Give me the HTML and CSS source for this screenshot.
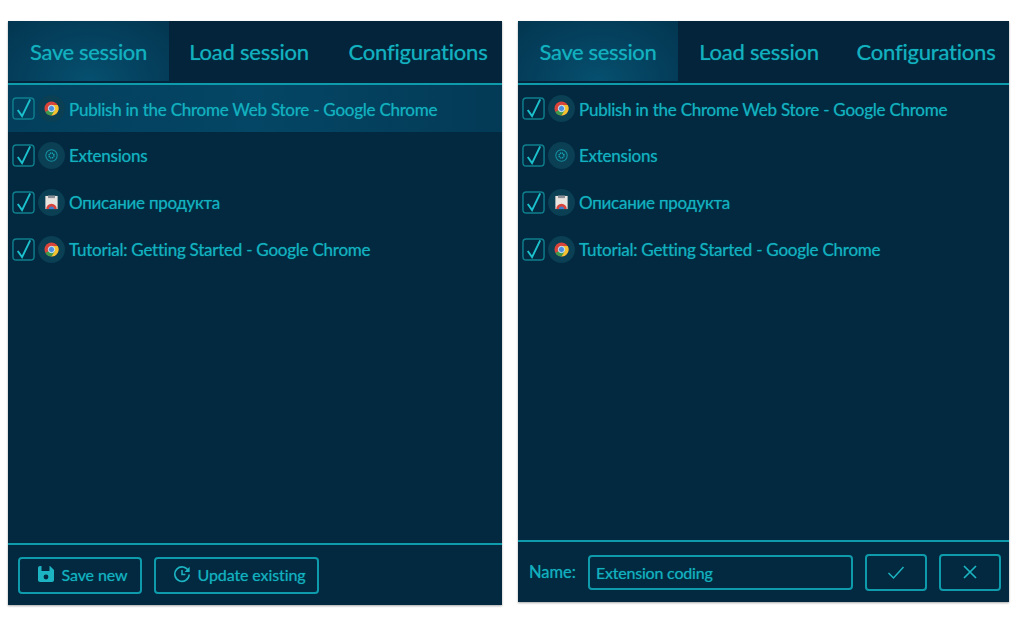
FILE: index.html
```html
<!DOCTYPE html>
<html lang="en">
<head>
    <meta charset="UTF-8">
    <title>Session manager</title>
    <link rel="stylesheet" href="styles.css">
</head>
<body>
    <svg class="defs" width="0" height="0">
        <defs>
            <symbol id="check" viewBox="0 0 24 24">
                <rect x="1" y="1" width="22" height="22" rx="3.5" fill="none" stroke="#0f7f8e" stroke-width="1.5"/>
                <path d="M6 13.5 L10.5 20 L19 2.5" fill="none" stroke="#1cc0cc" stroke-width="2"/>
            </symbol>
            <symbol id="chrome" viewBox="0 0 24 24">
                <circle cx="12" cy="12" r="8" fill="#d8433a"/>
                <path d="M12 12 L12 20 A8 8 0 0 0 19 8 L12 8 Z" fill="#f2c230"/>
                <path d="M12 12 L5 16 A8 8 0 0 0 12 20 L15.5 14 Z" fill="#3f9b4c"/>
                <circle cx="12" cy="12" r="3.6" fill="#4a8ee0" stroke="#e6eef0" stroke-width="1.1"/>
            </symbol>
            <symbol id="gear" viewBox="0 0 24 24">
                <circle cx="12" cy="12" r="6.5" fill="none" stroke="#17909f" stroke-width="1.2"/>
                <circle cx="12" cy="12" r="2.8" fill="none" stroke="#17a5b2" stroke-width="1.8" stroke-dasharray="1.4 0.8"/>
            </symbol>
            <symbol id="store" viewBox="0 0 24 24">
                <rect x="5" y="4.5" width="14" height="15" fill="#e8e4e0"/>
                <rect x="8" y="4" width="8" height="3" fill="#8a8f96"/>
                <path d="M6 19.5 A6 6 0 0 1 18 19.5 Z" fill="#d8433a"/>
                <path d="M9 19.5 A3 3 0 0 1 15 19.5 Z" fill="#3f7fd0"/>
            </symbol>
        </defs>
    </svg>

    <section class="panel panel-left">
        <nav class="tabs">
            <a class="tab active">Save session</a>
            <a class="tab">Load session</a>
            <a class="tab">Configurations</a>
        </nav>
        <ul class="tab-list">
            <li class="tab-row selected">
                <svg class="checkbox"><use href="#check"/></svg>
                <span class="favicon"><svg><use href="#chrome"/></svg></span>
                <span>Publish in the Chrome Web Store - Google Chrome</span>
            </li>
            <li class="tab-row">
                <svg class="checkbox"><use href="#check"/></svg>
                <span class="favicon"><svg><use href="#gear"/></svg></span>
                <span>Extensions</span>
            </li>
            <li class="tab-row">
                <svg class="checkbox"><use href="#check"/></svg>
                <span class="favicon"><svg><use href="#store"/></svg></span>
                <span>Описание продукта</span>
            </li>
            <li class="tab-row">
                <svg class="checkbox"><use href="#check"/></svg>
                <span class="favicon"><svg><use href="#chrome"/></svg></span>
                <span>Tutorial: Getting Started - Google Chrome</span>
            </li>
        </ul>
        <footer class="panel-footer">
            <button class="btn btn-save">
                <svg class="btn-icon" viewBox="0 0 18 18"><path d="M1 3 A2 2 0 0 1 3 1 H13 L17 5 V15 A2 2 0 0 1 15 17 H3 A2 2 0 0 1 1 15 Z" fill="#1cb4c2"/><rect x="4.5" y="1" width="8" height="5" fill="#02293f"/><circle cx="9" cy="12" r="2.4" fill="#02293f"/></svg>
                Save new
            </button>
            <button class="btn btn-update">
                <svg class="btn-icon" viewBox="0 0 18 18"><path d="M15.5 6 A7.2 7.2 0 1 0 16.2 9.5" fill="none" stroke="#1cb4c2" stroke-width="1.6"/><path d="M16.6 1.8 V7 H11.6 Z" fill="#1cb4c2"/><path d="M9 5 V9.6 H12.4" fill="none" stroke="#1cb4c2" stroke-width="1.5"/></svg>
                Update existing
            </button>
        </footer>
    </section>

    <section class="panel panel-right">
        <nav class="tabs">
            <a class="tab active">Save session</a>
            <a class="tab">Load session</a>
            <a class="tab">Configurations</a>
        </nav>
        <ul class="tab-list">
            <li class="tab-row">
                <svg class="checkbox"><use href="#check"/></svg>
                <span class="favicon"><svg><use href="#chrome"/></svg></span>
                <span>Publish in the Chrome Web Store - Google Chrome</span>
            </li>
            <li class="tab-row">
                <svg class="checkbox"><use href="#check"/></svg>
                <span class="favicon"><svg><use href="#gear"/></svg></span>
                <span>Extensions</span>
            </li>
            <li class="tab-row">
                <svg class="checkbox"><use href="#check"/></svg>
                <span class="favicon"><svg><use href="#store"/></svg></span>
                <span>Описание продукта</span>
            </li>
            <li class="tab-row">
                <svg class="checkbox"><use href="#check"/></svg>
                <span class="favicon"><svg><use href="#chrome"/></svg></span>
                <span>Tutorial: Getting Started - Google Chrome</span>
            </li>
        </ul>
        <footer class="panel-footer name-footer">
            <label class="name-label" for="sessionName">Name:</label>
            <input class="name-input" id="sessionName" type="text" value="Extension coding">
            <button class="btn btn-square">
                <svg class="btn-icon" viewBox="0 0 18 18"><path d="M1.5 10 L6.5 15 L16.5 4" fill="none" stroke="#1cb4c2" stroke-width="1.5"/></svg>
            </button>
            <button class="btn btn-square">
                <svg class="btn-icon" viewBox="0 0 18 18"><path d="M3 3 L15 15 M15 3 L3 15" fill="none" stroke="#1cb4c2" stroke-width="1.7"/></svg>
            </button>
        </footer>
    </section>
</body>
</html>
```

FILE: styles.css
```css
:root {
    --fundo: #02293f;
    --fundo-tabs: #03243a;
    --ciano: #12b1bf;
    --linha: #0e9cac;
}
* { box-sizing: border-box; margin: 0; padding: 0; }
body {
    background: #fff;
    font-family: Lato, "Noto Sans", sans-serif;
    color: var(--ciano);
    text-shadow: 0 0 1px rgba(18, 177, 191, 0.65);
    display: flex;
    align-items: flex-start;
    gap: 16px;
    padding: 21px 0 0 8px;
    height: 638px;
    overflow: hidden;
}
.defs { position: absolute; }
.panel {
    display: flex;
    flex-direction: column;
    background: var(--fundo);
    box-shadow: 0 1px 2px rgba(0, 0, 0, 0.35);
}
.panel-left { width: 494px; height: 584px; }
.panel-right { width: 491px; height: 581px; }

.tabs {
    display: flex;
    height: 64px;
    flex: none;
    background: var(--fundo-tabs);
    border-bottom: 2px solid var(--linha);
    padding-bottom: 2px;
}
.tab {
    display: flex;
    align-items: center;
    justify-content: center;
    font-size: 22px;
    width: 160px;
    letter-spacing: -0.2px;
}
.tab.active {
    letter-spacing: -0.35px;
    background: radial-gradient(ellipse at 50% 100%, #06506f 0%, #043f5c 60%, #033650 100%);
}
.tab:first-child { width: 161px; }
.tab:last-child { width: 173px; padding-left: 5px; }
.panel-right .tab:nth-child(2) { padding-left: 3px; }
.panel-right .tab:last-child { padding-left: 6px; }

.tab-list { list-style: none; flex: 1; }
.tab-row {
    display: flex;
    align-items: center;
    height: 47px;
    padding-left: 4px;
    font-size: 17px;
    letter-spacing: -0.24px;
}
.tab-row > span:last-child { margin-left: 1px; }
.tab-row:first-child > span:last-child { padding-top: 1px; }
.tab-row.selected {
    background: linear-gradient(90deg, #033f5c 0%, #044665 50%, #033a56 100%);
}
.checkbox { width: 23px; height: 23px; flex: none; }
.favicon {
    width: 27px;
    height: 27px;
    margin: 0 3px;
    flex: none;
    border-radius: 50%;
    background: #0a3f54;
    display: flex;
    align-items: center;
    justify-content: center;
}
.favicon svg { width: 21px; height: 21px; }

.panel-footer {
    flex: none;
    height: 62px;
    display: flex;
    align-items: center;
    gap: 12px;
    padding: 0 10px;
    border-top: 2px solid var(--linha);
}
.btn {
    display: flex;
    align-items: center;
    justify-content: center;
    gap: 7px;
    height: 37px;
    background: transparent;
    border: 2px solid var(--linha);
    border-radius: 4px;
    color: var(--ciano);
    font-family: inherit;
    font-size: 16px;
    letter-spacing: -0.1px;
    text-shadow: inherit;
}
.btn-icon { width: 18px; height: 18px; flex: none; }
.btn-save { width: 124px; padding: 0 0 2px 4px; }
.btn-update { width: 165px; padding: 0 0 2px 5px; }
.name-footer { gap: 12px; padding: 0 8px 0 11px; }
.name-label { font-size: 16.5px; }
.name-input {
    width: 265px;
    height: 35px;
    padding: 0 6px;
    background: transparent;
    border: 2px solid var(--linha);
    border-radius: 4px;
    color: var(--ciano);
    font-family: inherit;
    font-size: 16px;
    letter-spacing: -0.2px;
    text-shadow: inherit;
}
.btn-square { width: 62px; }
```
